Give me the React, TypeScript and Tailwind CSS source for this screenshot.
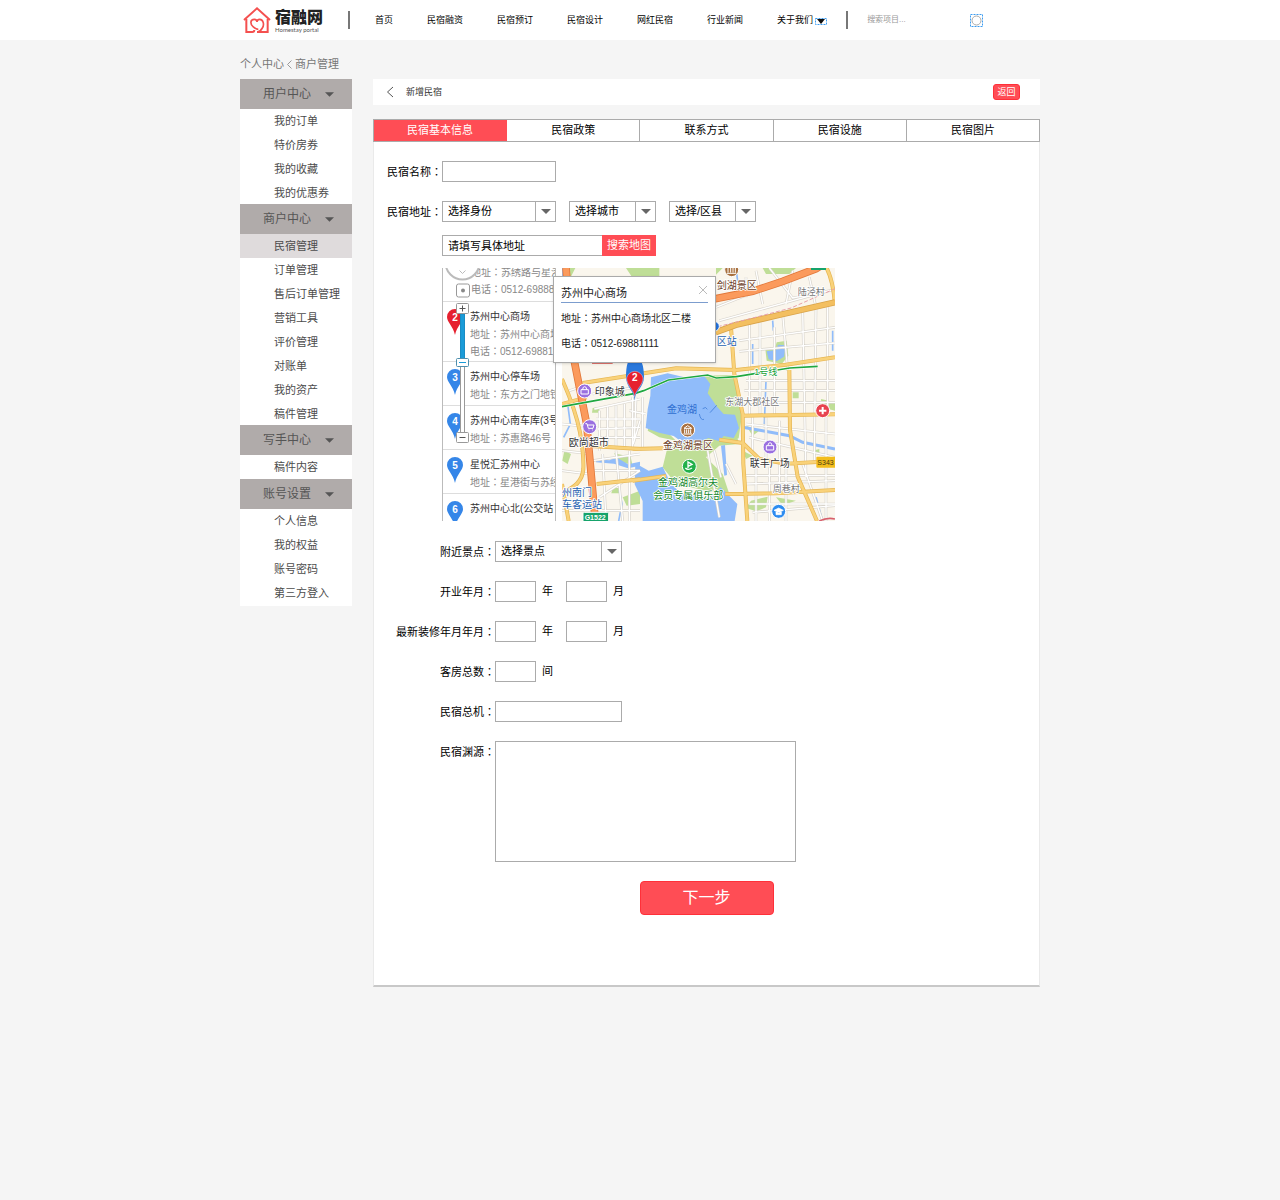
import type { ReactNode } from 'react'
import { clsx } from 'clsx'

const navLinks = ['首页', '民宿融资', '民宿预订', '民宿设计', '网红民宿', '行业新闻']

const menuGroups = [
  { title: '用户中心', items: ['我的订单', '特价房券', '我的收藏', '我的优惠券'], tight: true },
  {
    title: '商户中心',
    items: ['民宿管理', '订单管理', '售后订单管理', '营销工具', '评价管理', '对账单', '我的资产', '稿件管理'],
    tight: true,
  },
  { title: '写手中心', items: ['稿件内容'] },
  { title: '账号设置', items: ['个人信息', '我的权益', '账号密码', '第三方登入'] },
]

const tabs = ['民宿基本信息', '民宿政策', '联系方式', '民宿设施', '民宿图片']

const places = [
  { no: 2, name: '苏州中心商场', address: '苏州中心商场', phone: '0512-69881', active: true },
  { no: 3, name: '苏州中心停车场', address: '东方之门地铁' },
  { no: 4, name: '苏州中心南车库(3号', address: '苏惠路46号' },
  { no: 5, name: '星悦汇苏州中心', address: '星港街与苏绣' },
  { no: 6, name: '苏州中心北(公交站' },
]

const fieldClass = 'h-[21px] border border-[#ababab] bg-white text-[11px] text-black outline-none'

function Caret({ className }: { className?: string }) {
  return (
    <svg viewBox="0 0 10 5" className={clsx('shrink-0', className)} aria-hidden="true">
      <path d="M0 0h10L5 5z" fill="currentColor" />
    </svg>
  )
}

// full-width colon, centred in its cell
function Colon() {
  return <span className="font-['Noto_Sans_CJK_TC',sans-serif]">：</span>
}

function Logo() {
  return (
    <a href="#" className="flex items-center gap-1">
      <svg viewBox="39 22 82 78" className="h-[26px] w-[28px]" fill="none" stroke="#f4504f" aria-hidden="true">
        <path d="M41 61 80 26l39 35" strokeWidth="6" />
        <path d="M48 58v39h18q6 0 6-6M112 58v39H80" strokeWidth="6" />
        <path d="M82 97q8-1 14-12c6-8 4-26-8-26-5 0-8 4-8 8 0-4-3-8-8-8-14 0-12 16-4 22 6 5 10 8 16 8" strokeWidth="5" />
      </svg>
      <span className="flex flex-col pt-[2px]">
        <span className="text-[16px] leading-[17px] font-black text-[#222]">宿融网</span>
        <span className="font-[Lato,sans-serif] text-[6px] leading-[7px] text-[#555]">Homestay portal</span>
      </span>
    </a>
  )
}

function Header() {
  return (
    <header className="bg-white">
      <div className="mx-auto flex h-10 max-w-[800px] items-center pl-[3px]">
        <Logo />
        <span className="ml-[25px] h-[18px] w-[2px] bg-[#777]" />
        <nav className="ml-[25px] flex items-center gap-[34px] pt-[2px] text-[9px] whitespace-nowrap text-black">
          {navLinks.map((link) => (
            <a key={link} href="#">
              {link}
            </a>
          ))}
          <a href="#" className="flex items-center gap-[2px]">
            关于我们
            <svg viewBox="0 0 12 7" className="h-[7px] w-[12px]" aria-hidden="true">
              <rect x="0.5" y="0.5" width="11" height="6" fill="none" stroke="#3c9cf0" strokeDasharray="2 1" />
              <path d="M2 1h8L6 6z" fill="#111" />
            </svg>
          </a>
        </nav>
        <span className="ml-[19px] h-[18px] w-[2px] bg-[#777]" />
        <form className="ml-[19px] flex items-center">
          <input
            type="text"
            aria-label="搜索项目"
            placeholder="搜索项目..."
            className="w-[103px] text-[8px] outline-none placeholder:text-[#999]"
          />
          <button type="button" aria-label="搜索">
            <svg viewBox="0 0 13 13" className="h-[13px] w-[13px]" fill="none">
              <rect x="0.5" y="0.5" width="12" height="12" stroke="#3c9cf0" strokeDasharray="2 1" />
              <circle cx="6.5" cy="6.5" r="4.5" stroke="#aaa" />
            </svg>
          </button>
        </form>
      </div>
    </header>
  )
}

function Sidebar() {
  return (
    <aside className="w-[112px] shrink-0 bg-white pb-px text-[#4c4c4c]">
      {menuGroups.map((group) => (
        <section key={group.title}>
          <button
            type="button"
            className="flex h-[30px] w-full items-center gap-[14px] bg-[#b0abaa] pl-[23px] text-[12px] text-[#555]"
          >
            {group.title}
            <Caret className="h-[5px] w-[9px]" />
          </button>
          <ul className={clsx(group.tight && '-mb-px')}>
            {group.items.map((item) => (
              <li key={item}>
                <a
                  href="#"
                  className={clsx(
                    'block h-6 pl-[34px] text-[11px] leading-6 whitespace-nowrap',
                    item === '民宿管理' && 'bg-[#dfdbdc]',
                  )}
                >
                  {item}
                </a>
              </li>
            ))}
          </ul>
        </section>
      ))}
    </aside>
  )
}

function FieldLabel({ htmlFor, wide, children }: { htmlFor: string; wide?: boolean; children: ReactNode }) {
  return (
    <label
      htmlFor={htmlFor}
      className={clsx('h-[21px] shrink-0 text-right leading-[21px] whitespace-nowrap', wide ? 'w-[121px]' : 'w-[68px]')}
    >
      {children}
      <Colon />
    </label>
  )
}

function Select({ id, label, text, className }: { id: string; label?: string; text: string; className: string }) {
  return (
    <span className={clsx('relative', className)}>
      <select id={id} aria-label={label} className={clsx(fieldClass, 'w-full appearance-none pr-5 pl-[5px]')}>
        <option>{text}</option>
      </select>
      <span className="pointer-events-none absolute inset-y-0 right-0 flex w-[21px] items-center justify-center border-l border-[#ababab] text-[#666]">
        <Caret className="h-[5px] w-[10px]" />
      </span>
    </span>
  )
}

function Pin({ no, active, className }: { no: number; active?: boolean; className?: string }) {
  return (
    <svg viewBox="0 0 16 26" className={clsx('h-[26px] w-4', className)} aria-hidden="true">
      <path
        d="M8 0a8 8 0 0 1 8 8c0 5-6 9-8 18C6 17 0 13 0 8a8 8 0 0 1 8-8z"
        fill={active ? '#e6212f' : '#3586e8'}
      />
      <text x="8" y="12" textAnchor="middle" fontSize="10" fontWeight="bold" fill="#fff">
        {no}
      </text>
    </svg>
  )
}

function PlaceList() {
  return (
    <div className="w-[114px] shrink-0 overflow-hidden border-x border-[#bbb] bg-white text-[10px] whitespace-nowrap text-[#888]">
      <div className="flex h-[34px] flex-col justify-end border-b border-[#ddd] pb-[3px] pl-[28px] leading-4">
        <p>
          地址
          <Colon />
          苏绣路与星港
        </p>
        <p>
          电话
          <Colon />
          0512-69888
        </p>
      </div>
      {places.map((place) => (
        <div
          key={place.no}
          className={clsx('flex gap-[7px] border-b border-[#ddd] pt-[7px] pl-[4px]', place.phone ? 'h-[60px]' : 'h-11')}
        >
          <Pin no={place.no} active={place.active} className="shrink-0" />
          <div>
            <p className="leading-4 text-[#333]">{place.name}</p>
            {place.address && (
              <p className="leading-[17px]">
                地址
                <Colon />
                {place.address}
              </p>
            )}
            {place.phone && (
              <p className="leading-4">
                电话
                <Colon />
                {place.phone}
              </p>
            )}
          </div>
        </div>
      ))}
    </div>
  )
}

function ZoomSlider() {
  return (
    <svg viewBox="0 0 40 180" className="absolute top-0 left-0 h-[180px] w-10" fill="#fff" stroke="#999" aria-hidden="true">
      <circle cx="20.5" cy="-5.5" r="17" stroke="#bbb" strokeWidth="2" />
      <path d="M17.5 2.5l3 3 3-3" fill="none" stroke="#bbb" />
      <rect x="14.5" y="16" width="13" height="13" rx="2" />
      <circle cx="21" cy="22.5" r="2" fill="#888" stroke="none" />
      <rect x="18.5" y="98" width="4" height="68" />
      <rect x="18.5" y="46" width="4" height="46" fill="#1a9bd8" stroke="#1a8cc4" />
      <rect x="14.5" y="35.5" width="12" height="10" rx="1" />
      <path d="M17.5 40.5h6M20.5 37.5v6" stroke="#555" />
      <rect x="14.5" y="90.5" width="12" height="8" rx="1" stroke="#4d8fae" />
      <path d="M17 94.5h7" stroke="#1a9bd8" />
      <rect x="14.5" y="164.5" width="12" height="10" rx="1" />
      <path d="M17.5 169.5h6" stroke="#555" />
    </svg>
  )
}

const minorStreets =
  'M330 40v60M360 20l20 100M470 20l-20 100M400 12l70 90 127-25M520 40l20 90M240 130l200-80M250 170l330-90' +
  'M340 180v270M372 175v280M415 190v260M440 150l15 170M500 140l10 500M540 130l-5 460M575 130v320' +
  'M310 230l287-40M310 262l287-25M330 350h267M325 380h272M325 415h272M330 480l267 30M340 520l257 60' +
  'M350 460v110M390 460v130M430 470v200M570 460v311M330 635h267M330 660l267-10M340 720h257M350 745l247-20' +
  'M360 600v171M400 610v161M450 610v161M500 600l60 171M235 560l20 80M215 560l35 200M270 600l30 60' +
  'M-110 440v120M-85 430v125M-60 425v130M-35 420v130M-10 400v150M-125 435l137-30M-120 465h132M-115 495l127-5M-115 520h127' +
  'M-200 380l60-20M-130 390l130-20M-222 480l100 10M-222 560l90 10M-130 590l142-20M-125 620h137M-110 700l122-80M-60 560l20 211' +
  'M-100 570l10 201M-20 560v211M-120 740h132M-222 620l80 10M-222 740h90M0 400l-5 130 M12 470l-20 70M20 400v150M-20 440l50 10'

const majorRoads =
  'M-10 333l130-20 180 5 150-16 147-22M285 190l10 140 25 120 2 150 12 171M460 318l2 180 23 140 58 133' +
  'M320 455l277-4M-10 555l92-2M250 527l70 10 50 48 80 14 147-8M-10 650l100-14M268 690l152-2 177-10' +
  'M-222 345q40 90 54 160 12 70 10 110-4 50-64 70M-160 357l140-22M-148 545l160 10M-118 660l130-14' +
  'M-222 660l20 111M-148 400l-74 20M572 12q20 40 25 110'

const metroLine = 'M-222 428l120-22 100-18 25-8 74-32 118-15 26 9 60-4 160-26 84-5'

const mapLabels = [
  { x: 242, y: 75, size: 30, fill: '#6b3d1e', text: '剑湖景区' },
  { x: 485, y: 93, size: 27, fill: '#777', text: '陆泾村' },
  { x: 242, y: 244, size: 30, fill: '#1f62b0', text: '区站' },
  { x: 355, y: 333, size: 27, fill: '#18a035', text: '1号线' },
  { x: 93, y: 448, size: 30, fill: '#2f6fd0', text: '金鸡湖' },
  { x: 268, y: 423, size: 27, fill: '#777', text: '东湖大郡社区' },
  { x: 81, y: 556, size: 30, fill: '#6b3d1e', text: '金鸡湖景区' },
  { x: 341, y: 609, size: 30, fill: '#333', text: '联丰广场' },
  { x: 66, y: 667, size: 30, fill: '#14882c', text: '金鸡湖高尔夫' },
  { x: 52, y: 705, size: 30, fill: '#14882c', text: '会员专属俱乐部' },
  { x: 410, y: 684, size: 27, fill: '#777', text: '周巷村' },
  { x: -124, y: 394, size: 30, fill: '#333', text: '印象城' },
  { x: -202, y: 546, size: 30, fill: '#333', text: '欧尚超市' },
  { x: -222, y: 696, size: 30, fill: '#1f62b0', text: '州南门' },
  { x: -222, y: 733, size: 30, fill: '#1f62b0', text: '车客运站' },
]

function CityMap() {
  return (
    <svg
      viewBox="-222 12 819 759"
      className="ml-[6px] h-[253px] w-[273px] shrink-0 bg-[#faf6ed]"
      fill="none"
      role="img"
      aria-label="地图"
    >
      {/* parks */}
      <g fill="#bfde97">
        <path d="M-222 12h40l-20 40-20 10zM-30 12h100v30H-10zM240 12h20l-20 20zM380 12h100l-20 18h-70z" />
        <path d="M190 335l100-2 14 50 14 70-10 70-60 20-60-30-20-90z" />
        <path d="M92 560l30-20 88-20 90-10 10 30-60 5-40 35 50 50 20 60-70-10-90-20-40-50z" />
        <path d="M40 480l50 20 30 30-50-10-35-20z" />
        <path d="M388 255l30-5 4-15 30-5 5 45-20 25-45-10zM470 385h18v18h-18zM330 485l40 15-20 15zM320 560l30 15-20 10z" />
        <path d="M555 405l42 10v25l-40-10zM345 710l50-12-5 32-30 12-30-10zM530 560l20-5v15zM420 700l60 10-40 14z" />
        <path d="M-130 432l20-2v16h-22zM-66 568l50 10 5 24-40-8zM-70 672h22v16h-26zM-40 700l52-20v40l-40 5zM-215 560l20 10-10 30-16-10z" />
      </g>
      {/* water */}
      <g fill="#90bcfa">
        <path d="M45 340l50-12 60 14 48-8 20 26-8 28 28 40 20 22 34 2 12 40-16 30-30-6-12 16-34-10-24 12-50 4-30-22-44-10-40-14 6-56 8-40z" />
        <path d="M-2 598l40 22 42-12 24 50 30 30 90 14 30-32 50 50-8 51H20v-60l-24-50z" />
        <path d="M392 262l28-4 6-16 24 2-6 34-22 14-24-6z" />
        <path d="M-222 12h12l-6 24h-6zM255 545l12-2 6 90-8 2zM-120 585l40 4 20-10 36 22 36-8v12l-36 8-42-14-54-4z" />
      </g>
      <g stroke="#90bcfa" strokeWidth="5">
        <path d="M320 490l60 10 80 15 40 20 97 20" strokeWidth="9" />
        <path d="M300 12l5 40M390 350l-5 130M350 240v60M410 170l2 30M-205 420l8 60-20 40M-50 680l8 40-10 51M540 700l20 71M590 200v60" />
      </g>
      {/* streets */}
      <path d={minorStreets} stroke="#d8d4cc" strokeWidth="8" />
      <path d={minorStreets} stroke="#fff" strokeWidth="4" />
      <path d={majorRoads} stroke="#e6b653" strokeWidth="12" />
      <path d={majorRoads} stroke="#f9d27a" strokeWidth="8" />
      <path d="M239 205l60-22 130-30 168-38" stroke="#d9a349" strokeWidth="19" />
      <path d="M239 205l60-22 130-30 168-38" stroke="#f3bf60" strokeWidth="14" />
      <path d="M-210 12l22 265 40 203 26 291M230 106l120-24 90-30 100-38 20-12" stroke="#e2783a" strokeWidth="23" />
      <path d="M-210 12l22 265 40 203 26 291M230 106l120-24 90-30 100-38 20-12" stroke="#fb9a5c" strokeWidth="18" />
      {/* railway and metro */}
      <path d="M245 188l90-22 130-34 132-58" stroke="#e8a0a8" strokeWidth="3" strokeDasharray="12 6" />
      <path d={metroLine} stroke="#fff" strokeWidth="8" />
      <path d={metroLine} stroke="#20a840" strokeWidth="5" />
      <path d="M242 424l-20 22M190 450q4 20 14 16M200 434q10-8 14 2" stroke="#2f6fd0" strokeWidth="2" />

      {mapLabels.map((label) => (
        <text
          key={label.text}
          x={label.x}
          y={label.y}
          fontSize={label.size}
          fill={label.fill}
          stroke={label.text === '金鸡湖' ? 'none' : '#fff'}
          strokeWidth="5"
          strokeLinejoin="round"
          paintOrder="stroke"
        >
          {label.text}
        </text>
      ))}

      {/* road number plates */}
      <rect x="541" y="578" width="60" height="33" rx="3" fill="#f3bd1d" />
      <text x="544" y="603" fontSize="21" fill="#4a3c10">
        S343
      </text>
      <rect x="-159" y="745" width="77" height="30" rx="4" fill="#16a36b" stroke="#fff" strokeWidth="3" />
      <text x="-154" y="768" fontSize="21" fontWeight="bold" fill="#fff">
        G1522
      </text>
      <path d="M525 12h45v6h-45z" fill="#16a36b" />
      <path d="M-132 285h62v14h-62z" fill="#d8342f" />
      <path d="M550 771q25-12 47-6" stroke="#d8606c" strokeWidth="5" />

      {/* points of interest */}
      <g stroke="#fff" strokeWidth="3">
        <g fill="#a8703f">
          <circle cx="287" cy="17" r="21" />
          <path d="M276 12v14M284 12v14M291 12v14M298 12v14M273 28h28" />
          <circle cx="155" cy="498" r="21" />
          <path d="M144 493l11-8 12 8zM146 496v12M152 496v12M158 496v12M164 496v12M142 510h26" />
        </g>
        <circle cx="160" cy="607" r="21" fill="#22b04a" />
        <path d="M156 612v-18l12 7-12 6M148 612q8 8 20 0" strokeWidth="4" />
        <g fill="#9a6fe0">
          <circle cx="402" cy="549" r="21" />
          <path d="M391 545h22v13h-22zM396 545q0-9 6-9t6 9" />
          <circle cx="-154" cy="381" r="21" />
          <path d="M-165 377h22v13h-22zM-160 377q0-9 6-9t6 9" />
          <circle cx="-139" cy="488" r="21" />
          <path d="M-152 479h5l4 14h14l3-10h-20M-142 498h2M-132 498h2" />
        </g>
        <circle cx="560" cy="440" r="21" fill="#e8434f" />
        <path d="M560 429v22M549 440h22" strokeWidth="6" />
        <circle cx="428" cy="742" r="21" fill="#2d8cf0" />
        <path d="M414 739l14-7 14 7-14 7zM420 744v8h16v-8" fill="#fff" strokeWidth="2" />
        <circle cx="236" cy="187" r="14" fill="#2470d8" />
      </g>

      {/* selected place */}
      <path d="M-4 410c0-30-26-40-26-72 0-34 6-54 18-54l8 10 8-10c12 0 20 20 20 54 0 32-28 42-28 72z" fill="#2a78dc" />
      <path d="M-4 398c-4-24-24-34-24-56a25 25 0 0 1 49 0c0 22-20 32-25 56z" fill="#e6212f" stroke="#fff" strokeWidth="1" />
      <text x="-4" y="351" textAnchor="middle" fontSize="30" fontWeight="bold" fill="#fff">
        2
      </text>
    </svg>
  )
}

function MapPanel() {
  return (
    <div className="relative ml-[68px] flex h-[253px] w-[393px] overflow-hidden">
      <PlaceList />
      <CityMap />
      <ZoomSlider />
      <div className="absolute top-2 left-[111px] h-[87px] w-[163px] border border-[#aaa] bg-white px-[7px] text-[10px] whitespace-nowrap text-[#222] shadow-sm">
        <div className="flex h-[26px] items-end justify-between border-b border-[#7c9dce]">
          <h3 className="text-[11px] leading-[18px]">苏州中心商场</h3>
          <button type="button" aria-label="关闭" className="mb-[7px]">
            <svg viewBox="0 0 10 10" className="h-[10px] w-[10px]" stroke="#bbb">
              <path d="M1 1l8 8M9 1l-8 8" />
            </svg>
          </button>
        </div>
        <p className="mt-[3px] leading-6">
          地址
          <Colon />
          苏州中心商场北区二楼
        </p>
        <p className="leading-6">
          电话
          <Colon />
          0512-69881111
        </p>
      </div>
    </div>
  )
}

function YearMonthRow({ id, label }: { id: string; label: string }) {
  return (
    <div className="flex">
      <FieldLabel htmlFor={id} wide>
        {label}
      </FieldLabel>
      <input id={id} type="text" className={clsx(fieldClass, 'w-[41px]')} />
      <span className="ml-[6px] leading-[21px]">年</span>
      <input type="text" aria-label={`${label}（月）`} className={clsx(fieldClass, 'ml-[13px] w-[41px]')} />
      <span className="ml-[6px] leading-[21px]">月</span>
    </div>
  )
}

function HomestayForm() {
  return (
    <form className="flex flex-col border-x border-b-2 border-x-[#eaeaea] border-b-[#c8c8c8] bg-white pt-[19px] pb-[70px] text-[11px] text-black">
      <div className="flex">
        <FieldLabel htmlFor="name">民宿名称</FieldLabel>
        <input id="name" type="text" className={clsx(fieldClass, 'w-[114px]')} />
      </div>

      <div className="mt-[19px] flex">
        <FieldLabel htmlFor="province">民宿地址</FieldLabel>
        <div className="flex gap-[13px]">
          <Select id="province" text="选择身份" className="w-[114px]" />
          <Select id="city" label="选择城市" text="选择城市" className="w-[87px]" />
          <Select id="district" label="选择/区县" text="选择/区县" className="w-[87px]" />
        </div>
      </div>

      <div className="mt-[13px] mb-3 ml-[68px] flex">
        <input
          type="text"
          aria-label="具体地址"
          placeholder="请填写具体地址"
          className={clsx(fieldClass, 'w-[160px] border-r-0 px-[5px] placeholder:text-black')}
        />
        <button type="button" className="h-[21px] w-[54px] bg-[#ff4d55] text-white">
          搜索地图
        </button>
      </div>

      <MapPanel />

      <div className="mt-5 flex flex-col gap-[19px]">
        <div className="flex">
          <FieldLabel htmlFor="spot" wide>
            附近景点
          </FieldLabel>
          <Select id="spot" text="选择景点" className="w-[127px]" />
        </div>
        <YearMonthRow id="opened" label="开业年月" />
        <YearMonthRow id="renovated" label="最新装修年月年月" />
        <div className="flex">
          <FieldLabel htmlFor="rooms" wide>
            客房总数
          </FieldLabel>
          <input id="rooms" type="text" className={clsx(fieldClass, 'w-[41px]')} />
          <span className="ml-[6px] leading-[21px]">间</span>
        </div>
        <div className="flex">
          <FieldLabel htmlFor="phone" wide>
            民宿总机
          </FieldLabel>
          <input id="phone" type="text" className={clsx(fieldClass, 'w-[127px]')} />
        </div>
        <div className="flex">
          <FieldLabel htmlFor="story" wide>
            民宿渊源
          </FieldLabel>
          <textarea
            id="story"
            className="h-[121px] w-[301px] resize-none border border-[#ababab] bg-white outline-none"
          />
        </div>
        <button
          type="button"
          className="mx-auto h-[34px] w-[134px] rounded-[4px] border border-[#ff3039] bg-[#ff4d55] text-[16px] leading-8 text-white"
        >
          下一步
        </button>
      </div>
    </form>
  )
}

export default function App() {
  return (
    <div className="min-h-screen bg-[#f5f5f5] font-['Liberation_Sans','Noto_Sans_CJK_SC',sans-serif]">
      <Header />
      <div className="mx-auto max-w-[800px]">
        <nav className="flex h-[39px] items-center gap-[3px] pt-[10px] text-[11px] text-[#777]">
          <a href="#">个人中心</a>
          <svg viewBox="0 0 5 9" className="h-[9px] w-[5px]" fill="none" stroke="#999" aria-hidden="true">
            <path d="M4.5 0.5l-4 4 4 4" />
          </svg>
          <a href="#">商户管理</a>
        </nav>

        <div className="flex items-start gap-[21px]">
          <Sidebar />
          <main className="min-w-0 flex-1">
            <div className="flex h-[26px] items-center bg-white pr-5 pl-[13px] text-[9px] text-[#333]">
              <svg viewBox="0 0 8 12" className="h-3 w-2" fill="none" stroke="#555" aria-hidden="true">
                <path d="M7 1L1.5 6 7 11" />
              </svg>
              <h1 className="ml-3 flex-1 pt-[2px]">新增民宿</h1>
              <button type="button" className="h-4 w-[27px] rounded-[3px] border border-[#ff3039] bg-[#ff4d55] leading-[14px] text-white">
                返回
              </button>
            </div>

            <div
              role="tablist"
              className="mt-[14px] grid grid-cols-5 border border-r-0 border-[#ababab] bg-white text-[11px] text-black"
            >
              {tabs.map((tab, i) => (
                <button
                  key={tab}
                  type="button"
                  role="tab"
                  aria-selected={i === 0}
                  className={clsx('h-[21px] border-r', i === 0 ? 'border-[#ff4d55] bg-[#ff4d55] text-white' : 'border-[#ababab]')}
                >
                  {tab}
                </button>
              ))}
            </div>
            <HomestayForm />
          </main>
        </div>
      </div>
    </div>
  )
}
